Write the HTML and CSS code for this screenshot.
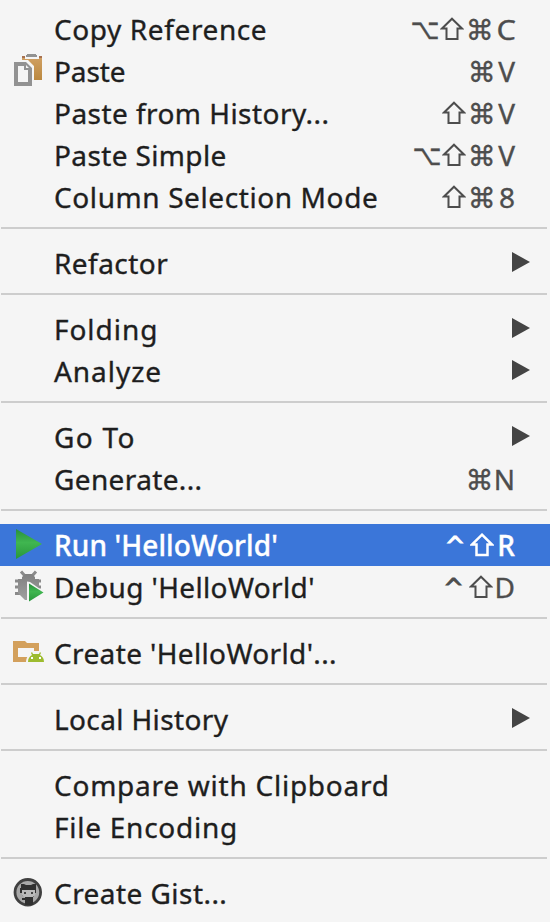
FILE: index.html
```
<!DOCTYPE html>
<html lang="en">
<head>
<meta charset="utf-8">
<title>Editor context menu</title>
<link rel="stylesheet" href="styles.css">
</head>
<body>
<ul class="menu">
  <li class="item"><span class="icon"></span><span class="label wide-s">Copy Reference</span><span class="keys"><i class="opt">⌥</i><svg class="shift" viewBox="0 0 24 24"><path d="M12 1.700L22 11.500h-4.500v10.400h-11V11.500H2z"/></svg><i>⌘</i><b class="broad">C</b></span></li>
  <li class="item"><span class="icon"><svg width="32" height="32" viewBox="0 0 32 32"><defs><linearGradient id="board" x2="0" y2="1"><stop stop-color="#d1a164"/><stop offset="1" stop-color="#bb883f"/></linearGradient></defs><path fill="url(#board)" d="M10 0h20v24H21V11l-6-6h-5z"/><path fill="#a8714f" d="M10 0h20v2H10z"/><path fill="#f5f5f5" d="M13 0h2v-2h10v2h2v3H13zM10 4h6l6 6v14h-2V11l-6-5h-4z"/><path fill="#929292" d="M15-2h9v1h1v2H14v-2h1z"/><path fill="#929292" fill-rule="evenodd" d="M2 6h12l6 6v18H2zM6 10v16h10V14h-4v-4zM14 9v3h3z"/></svg></span><span class="label tight">Paste</span><span class="keys"><i>⌘</i><b>V</b></span></li>
  <li class="item"><span class="icon"></span><span class="label">Paste from History...</span><span class="keys"><svg class="shift" viewBox="0 0 24 24"><path d="M12 1.700L22 11.500h-4.500v10.400h-11V11.500H2z"/></svg><i>⌘</i><b>V</b></span></li>
  <li class="item"><span class="icon"></span><span class="label tight-s">Paste Simple</span><span class="keys"><i class="opt">⌥</i><svg class="shift" viewBox="0 0 24 24"><path d="M12 1.700L22 11.500h-4.500v10.400h-11V11.500H2z"/></svg><i>⌘</i><b>V</b></span></li>
  <li class="item"><span class="icon"></span><span class="label wide-s">Column Selection Mode</span><span class="keys"><svg class="shift" viewBox="0 0 24 24"><path d="M12 1.700L22 11.500h-4.500v10.400h-11V11.500H2z"/></svg><i>⌘</i><b>8</b></span></li>
  <li class="separator"></li>
  <li class="item"><span class="icon"></span><span class="label">Refactor</span><span class="arrow"></span></li>
  <li class="separator"></li>
  <li class="item"><span class="icon"></span><span class="label wide">Folding</span><span class="arrow"></span></li>
  <li class="item"><span class="icon"></span><span class="label wide">Analyze</span><span class="arrow"></span></li>
  <li class="separator"></li>
  <li class="item"><span class="icon"></span><span class="label wide-l">Go To</span><span class="arrow"></span></li>
  <li class="item"><span class="icon"></span><span class="label tight-s">Generate...</span><span class="keys"><i>⌘</i><b>N</b></span></li>
  <li class="separator"></li>
  <li class="item selected"><span class="icon"><svg width="32" height="32" viewBox="0 0 32 32"><defs><linearGradient id="run" x2="0" y2="1"><stop stop-color="#288f3c"/><stop offset=".45" stop-color="#40b650"/><stop offset="1" stop-color="#28963b"/></linearGradient></defs><path fill="url(#run)" d="M4-1l26 15L4 29z"/></svg></span><span class="label tight-m">Run 'HelloWorld'</span><span class="keys"><i class="ctrl">^</i><svg class="shift" viewBox="0 0 24 24"><path d="M12 1.700L22 11.500h-4.500v10.400h-11V11.500H2z"/></svg><b>R</b></span></li>
  <li class="item"><span class="icon"><svg width="32" height="32" viewBox="0 0 32 32"><defs><linearGradient id="bug" x2="0" y2="1"><stop stop-color="#808080"/><stop offset="1" stop-color="#a0a0a0"/></linearGradient></defs><path fill="none" stroke="#8a8a8a" stroke-width="3" d="M9-.5l4 4.500M24-.5l-4 4.500M3 9h26M3 15h26M3 21.500h26"/><path fill="url(#bug)" d="M10 5l3-3h7l3 3v2h4v14l-7 7h-7l-7-7V7h4z"/><path fill="#f5f5f5" d="M15 9.500l3 .5 15 10.500-15 11.500h-3z"/><path fill="url(#run)" d="M17 11.500l14.500 9L17 29.500z"/></svg></span><span class="label tight-s">Debug 'HelloWorld'</span><span class="keys"><i class="ctrl">^</i><svg class="shift" viewBox="0 0 24 24"><path d="M12 1.700L22 11.500h-4.500v10.400h-11V11.500H2z"/></svg><b>D</b></span></li>
  <li class="separator"></li>
  <li class="item"><span class="icon"><svg width="32" height="32" viewBox="0 0 32 32"><path fill="#d3a05c" fill-rule="evenodd" d="M1 3h12l2 2h12v19H1zM6 10v9h16v-9z"/><path fill="#f5f5f5" d="M14 25c0-5 2-8 4-9l-1-3h14l-1 3 4 9z"/><path fill="#9dbc2f" d="M16 24c0-4 2-6 4-7l-1-2 1-1 1 2h6l1-2 1 1-1 2c2 1 4 3 4 7z"/><path fill="#fff" d="M19 19h2v2h-2zM27 19h2v2h-2z"/></svg></span><span class="label tight-s">Create 'HelloWorld'...</span></li>
  <li class="separator"></li>
  <li class="item"><span class="icon"></span><span class="label tight-s">Local History</span><span class="arrow"></span></li>
  <li class="separator"></li>
  <li class="item"><span class="icon"></span><span class="label wide-m">Compare with Clipboard</span></li>
  <li class="item"><span class="icon"></span><span class="label wide-m">File Encoding</span></li>
  <li class="separator"></li>
  <li class="item"><span class="icon"><svg width="32" height="32" viewBox="0 0 32 32"><circle cx="15.800" cy="14.300" r="12.800" fill="#a8a8a8" stroke="#404040" stroke-width="2.800"/><path fill="#303030" d="M9 6h3l2 1h5l2-1h3v9h-2v4h-1v8h-8v-5h-3v-2h3v-1l-3-2v-2H8v-5h1z"/><path fill="#bbb" d="M10 12h13v5l-2 2h-9l-2-2z"/><path fill="#444" d="M12 14h2v2h-2zM19 14h2v2h-2z"/></svg></span><span class="label">Create Gist...</span></li>
</ul>
</body>
</html>
```
FILE: styles.css
```
body {
  margin: 0;
  background: #f5f5f5;
  color: #1e1e1e;
  font: 28px/42px "Noto Sans", "Open Sans", sans-serif;
}
.menu { margin: 0; padding: 8px 0; list-style: none; }
.item {
  display: flex;
  height: 42px;
  white-space: nowrap;
  -webkit-text-stroke: 0.35px currentColor;
}
.icon { width: 42px; height: 32px; padding: 6px 0 0 12px; flex: none; }
.icon svg { display: block; overflow: visible; }
.label { flex: 1; letter-spacing: 0.45px; }
.tight { letter-spacing: -0.1px; }
.tight-m { letter-spacing: 0.1px; }
.tight-s { letter-spacing: 0.37px; }
.wide-s { letter-spacing: 0.6px; }
.wide-m { letter-spacing: 0.75px; }
.wide { letter-spacing: 0.95px; }
.wide-l { letter-spacing: 1.3px; }
.keys { display: flex; margin-right: 35px; color: #4d4d4d; }
.keys i {
  width: 28px;
  padding-top: 2px;
  text-align: center;
  font-style: normal;
  font-family: "DejaVu Sans", sans-serif;
}
.keys .opt { font-size: 26px; padding-top: 0; transform: scale(0.97, 1.1); }
.keys .shift {
  width: 24px;
  height: 24px;
  margin: 9px 2px 0;
  fill: none;
  stroke: currentColor;
  stroke-width: 2;
}
.keys .ctrl { width: 26px; font-size: 24px; padding-top: 1px; -webkit-text-stroke-width: 1px; }
.keys b {
  min-width: 19px;
  text-align: right;
  font-weight: 400;
}
.keys .broad { min-width: 21px; transform: scaleX(1.1); }
.arrow {
  width: 18px;
  height: 20px;
  margin: 10px 20px 0 0;
  background: #444;
  clip-path: polygon(0 0, 100% 50%, 0 100%);
}
.separator { box-sizing: border-box; height: 24px; padding: 9px 3px 0 1px; }
.separator::before { content: ""; display: block; height: 2px; background: #cdcdcd; }
.selected { background: #3b76d9; color: #fff; font-weight: 500; }
.selected .keys { color: #fff; }
.selected .shift { stroke-width: 2.5; }
.selected b { font-weight: 500; }
```
